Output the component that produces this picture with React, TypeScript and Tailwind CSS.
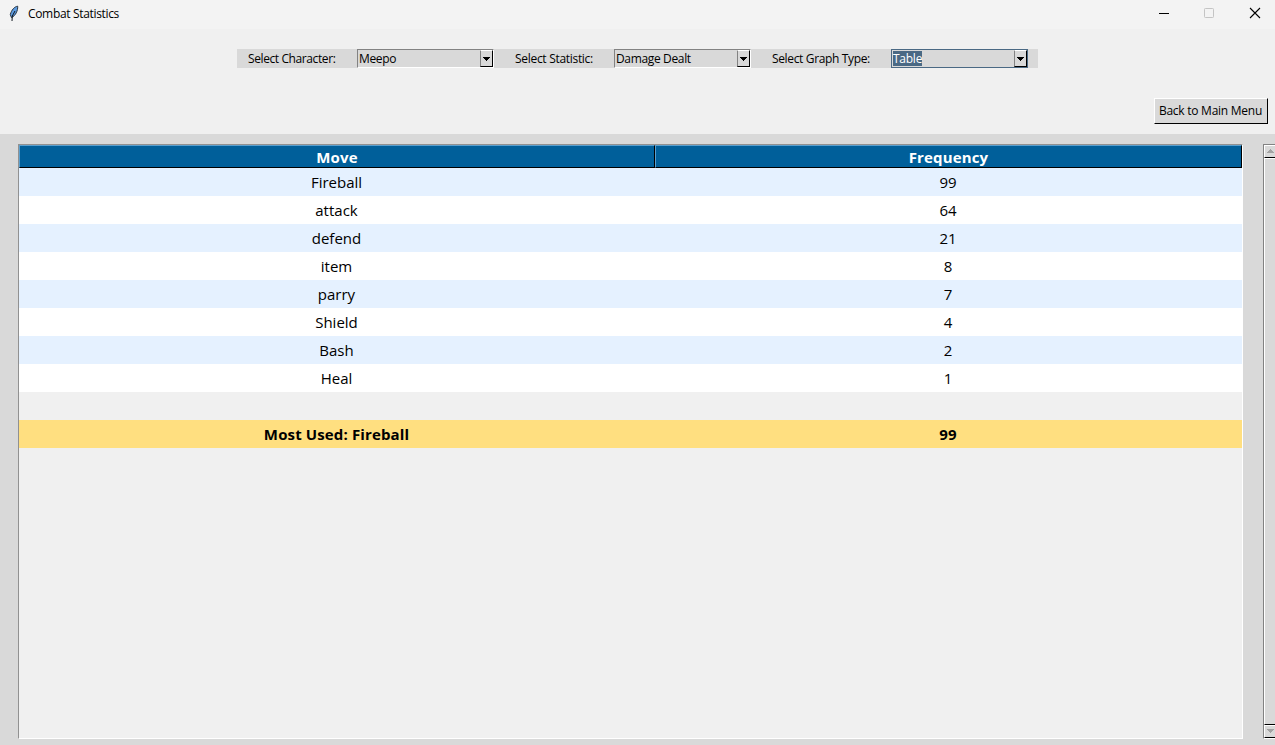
const rows: [string, string][] = [
  ['Fireball', '99'],
  ['attack', '64'],
  ['defend', '21'],
  ['item', '8'],
  ['parry', '7'],
  ['Shield', '4'],
  ['Bash', '2'],
  ['Heal', '1'],
];

function Combo({ value, selected = false }: { value: string; selected?: boolean }) {
  return (
    <div
      className={
        'flex h-[19px] w-[137px] shrink-0 border bg-[#d9d9d9] ' +
        (selected ? 'border-[#4a6984]' : 'border-t-[#828282] border-l-[#828282] border-r-white border-b-white')
      }
    >
      <div className="flex flex-1 items-center pl-px">
        <span
          className={
            'h-[15px] leading-[15px] ' +
            (selected ? 'bg-[#4a6984] tracking-[-0.25px] text-white' : 'tracking-[-0.35px] text-black')
          }
        >
          {value}
        </span>
      </div>
      <div className="flex w-[13px] items-center justify-center border border-t-white border-l-[#828282] border-r-black border-b-black">
        <svg width="7" height="4" viewBox="0 0 7 4" shapeRendering="crispEdges">
          <path d="M0 0h7v1h-1v1h-1v1h-1v1h-1v-1h-1v-1h-1v-1h-1z" fill="#000" />
        </svg>
      </div>
    </div>
  );
}

function TitleBar() {
  return (
    <header className="flex h-[29px] shrink-0 items-center bg-[#f3f3f3] pb-[2px]">
      <svg className="ml-[9px]" width="10" height="17" viewBox="0 0 10 17">
        <path d="M8.7 1.2C5.5 1.5 2.5 5 1.3 9.5L2.4 12.5C6.5 11 9 5.5 8.7 1.2Z" fill="#5d9be0" stroke="#26323e" strokeWidth="1" />
        <path d="M6 6L3.3 11L3 16" fill="none" stroke="#101820" strokeWidth="1" />
      </svg>
      <span className="ml-[9px] flex-1 text-[12px] tracking-[-0.33px] text-black">Combat Statistics</span>
      <div className="flex w-[116px] items-center justify-between pr-[14px]">
        <svg width="10" height="11" viewBox="0 0 10 11" shapeRendering="crispEdges">
          <path d="M0 5h10v1h-10z" fill="#000" />
        </svg>
        <svg className="relative -top-px" width="10" height="10" viewBox="0 0 10 10">
          <rect x="0.5" y="0.5" width="9" height="9" rx="0.8" fill="none" stroke="#c4c4c4" />
        </svg>
        <svg className="relative -top-px" width="12" height="12" viewBox="0 0 12 12">
          <path d="M1 1L11 11M11 1L1 11" stroke="#000" strokeWidth="1.1" />
        </svg>
      </div>
    </header>
  );
}

function ScrollButton({ down = false }: { down?: boolean }) {
  return (
    <div className="h-[13px] shrink-0 border-t border-b border-l border-t-white border-b-black border-l-white pt-[3px] pl-[2px]">
      <svg width="7" height="4" viewBox="0 0 7 4" shapeRendering="crispEdges">
        <path
          d={down ? 'M0 0h7v1h-1v1h-1v1h-1v1h-1v-1h-1v-1h-1v-1h-1z' : 'M0 4h7v-1h-1v-1h-1v-1h-1v-1h-1v1h-1v1h-1v1h-1z'}
          fill="#a3a3a3"
        />
      </svg>
    </div>
  );
}

const columns = 'grid grid-cols-[636px_587px]';
const headerCell =
  'h-[23px] border border-t-[#5ba0cf] border-r-black border-b-black border-l-[#5ba0cf] leading-[22px] tracking-[0.15px]';

export default function App() {
  return (
    <div className="flex h-[745px] w-[1275px] flex-col overflow-hidden bg-[#d9d9d9] font-['Open_Sans','Noto_Sans',sans-serif] text-[12px] text-black">
      <TitleBar />
      <section className="flex h-[105px] shrink-0 flex-col bg-[#f0f0f0] pt-5">
        <div className="mx-[237px] flex h-[19px] w-[801px] items-center bg-[#d9d9d9] whitespace-nowrap">
          <label className="w-[120px] pl-[11px] tracking-[-0.4px]">Select Character:</label>
          <Combo value="Meepo" />
          <label className="w-[120px] pl-[21px] tracking-[-0.3px]">Select Statistic:</label>
          <Combo value="Damage Dealt" />
          <label className="w-[140px] pl-[21px] tracking-[-0.35px]">Select Graph Type:</label>
          <Combo value="Table" selected />
        </div>
        <button className="mt-[30px] mr-[7px] h-[26px] w-[114px] self-end border border-t-white border-r-black border-b-black border-l-white bg-[#d9d9d9] pr-px tracking-[-0.25px] whitespace-nowrap">
          Back to Main Menu
        </button>
      </section>
      <main className="flex flex-1 pt-[10px] pl-[18px]">
        <div className="h-[595px] w-[1225px] shrink-0 border border-t-[#919191] border-r-white border-b-white border-l-[#919191] bg-[#f0f0f0] text-center text-[15px]">
          <div className={columns + ' h-[23px] bg-[#005f9a] font-bold text-white'}>
            <div className={headerCell}>Move</div>
            <div className={headerCell}>Frequency</div>
          </div>
          {rows.map(([move, count], i) => (
            <div
              key={move}
              className={columns + ' h-7 leading-7 ' + (i % 2 === 0 ? 'bg-[#e5f1ff]' : 'bg-white')}
            >
              <div className="pr-px">{move}</div>
              <div className="pr-px">{count}</div>
            </div>
          ))}
          <div className="h-7" />
          <div className={columns + ' h-7 bg-[#ffdf80] leading-7 font-bold tracking-[0.13px]'}>
            <div className="pr-px">Most Used: Fireball</div>
            <div className="pr-px">99</div>
          </div>
        </div>
        <div className="ml-5 flex h-[595px] w-3 shrink-0 flex-col border-t border-b border-l border-t-[#828282] border-b-white border-l-[#828282]">
          <ScrollButton />
          <div className="flex-1 border-t border-b border-l border-t-white border-b-black border-l-white" />
          <ScrollButton down />
        </div>
      </main>
    </div>
  );
}
